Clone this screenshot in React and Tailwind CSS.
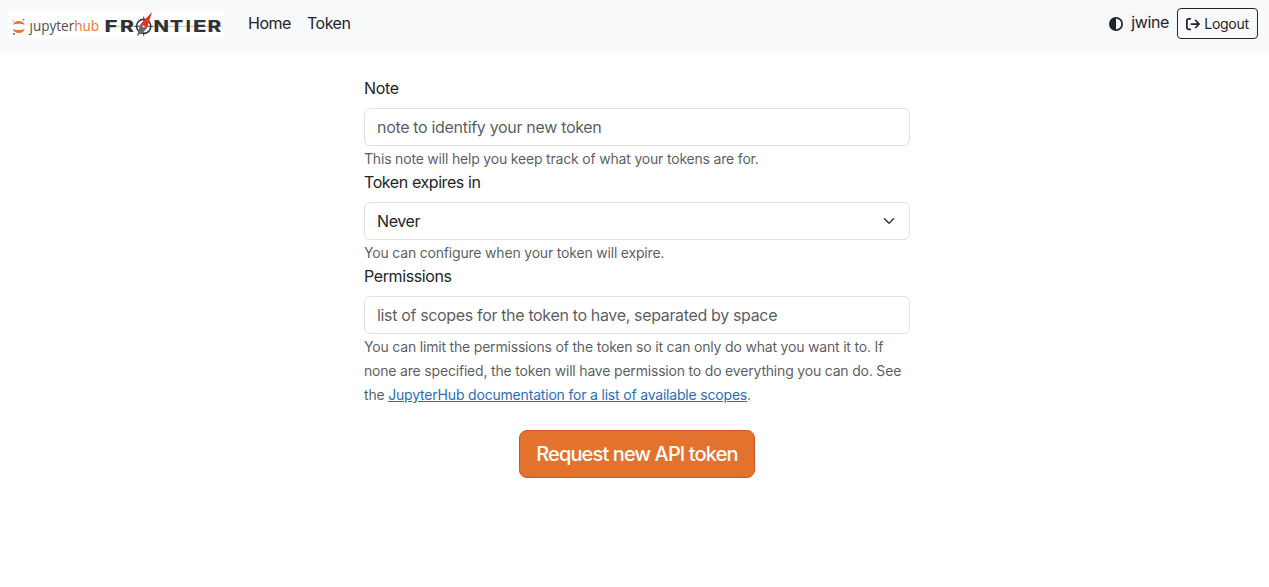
import { FaArrowRightFromBracket, FaCircleHalfStroke } from "react-icons/fa6";

function Logo() {
  return (
    <svg width="216" height="28" viewBox="8 11 216 28" role="img" aria-label="JupyterHub Frontier">
      <rect x="8" y="11" width="216" height="28" fill="#fff" />
      <g fill="#e8762d">
        <path d="M12.8 24.8 A6.3 5.6 0 0 1 24.8 24.8 A9.5 4.2 0 0 0 12.8 24.8Z" />
        <path d="M12.8 29 A6.3 5.6 0 0 0 24.8 29 A9.5 4.2 0 0 1 12.8 29Z" />
      </g>
      <g fill="#6d6d6f">
        <circle cx="23.6" cy="19.6" r="0.9" />
        <circle cx="13.4" cy="20.8" r="0.6" />
        <circle cx="14" cy="34" r="1.1" />
      </g>
      <text x="29.5" y="30.6" fontFamily="'Open Sans', sans-serif" fontSize="14" fill="#4e4e4e" textLength="69.5" lengthAdjust="spacingAndGlyphs">
        ȷupyter<tspan fill="#e8762d">hub</tspan>
      </text>
      <path d="M116 26.3H222" stroke="#999" strokeWidth="0.6" />
      <g fontFamily="Inter, sans-serif" fontWeight="800" fontSize="16.5" fill="#303236">
        <text x="104.5" y="32" textLength="13" lengthAdjust="spacingAndGlyphs">F</text>
        <text x="120" y="32" textLength="14" lengthAdjust="spacingAndGlyphs">R</text>
        <text x="153.5" y="32" textLength="15.5" lengthAdjust="spacingAndGlyphs">N</text>
        <text x="169.8" y="32" textLength="13.5" lengthAdjust="spacingAndGlyphs">T</text>
        <text x="185.8" y="32" textLength="5" lengthAdjust="spacingAndGlyphs">I</text>
        <text x="193" y="32" textLength="13.5" lengthAdjust="spacingAndGlyphs">E</text>
        <text x="207.6" y="32" textLength="13.8" lengthAdjust="spacingAndGlyphs">R</text>
      </g>
      <circle cx="143.7" cy="26.3" r="7.1" fill="none" stroke="#303236" strokeWidth="1.6" />
      <path d="M143.7 16.5V36.2M134 26.3H153.4" stroke="#303236" strokeWidth="0.8" />
      <path d="M152 12L140.2 24.6L146.8 28.8Z" fill="#e0342b" />
      <path d="M136.8 36.5L140.2 24.6L146.8 28.8Z" fill="#68696c" />
      <circle cx="143.5" cy="26.5" r="1" fill="#fff" />
    </svg>
  );
}

function Help({ children }) {
  return <div className="-mb-px pt-px text-sm leading-6 tracking-[-0.0135em] text-[#212529bf]">{children}</div>;
}

const field = "mt-2 flex h-[38px] w-full items-center rounded-md border border-[#dee2e6] bg-white px-3 text-base";

export default function App() {
  return (
    <div className="min-h-[587px] bg-white font-[Inter,sans-serif] text-base text-[#212529]">
      <nav className="flex h-[52px] items-start bg-[#f8f9fa] pl-2 pr-[11px]">
        <a href="#" className="mt-[11px] block"><Logo /></a>
        <a href="#" className="ml-6 mt-[11px] tracking-[-0.03em]">Home</a>
        <a href="#" className="ml-4 mt-[11px] tracking-[-0.03em]">Token</a>
        <div className="ml-auto flex items-start">
          <FaCircleHalfStroke className="mt-[17px] size-3.5" />
          <span className="ml-2 mt-2.5 tracking-[-0.025em]">jwine</span>
          <button className="ml-2 mt-2 flex h-[31px] w-[81px] items-center justify-center gap-1 rounded border border-[#212529] text-sm tracking-[-0.02em]">
            <FaArrowRightFromBracket className="size-3.5" />
            <span>Logout</span>
          </button>
        </div>
      </nav>
      <form className="ml-[364px] flex w-[546px] flex-col pt-6">
        <label className="leading-6 tracking-[-0.02em]">Note</label>
        <input className={`${field} tracking-[-0.02em] placeholder:text-[#212529bf]`} placeholder="note to identify your new token" />
        <Help>This note will help you keep track of what your tokens are for.</Help>
        <label className="leading-6 tracking-[-0.026em]">Token expires in</label>
        <div className={`${field} justify-between tracking-[-0.025em]`}>
          <span>Never</span>
          <svg className="mr-0.5 size-3" viewBox="0 0 16 16" fill="none" stroke="#343a40" strokeWidth="2" strokeLinecap="round" strokeLinejoin="round"><path d="m2 5 6 6 6-6" /></svg>
        </div>
        <Help>You can configure when your token will expire.</Help>
        <label className="leading-6 tracking-[-0.025em]">Permissions</label>
        <input className={`${field} tracking-[-0.0215em] placeholder:text-[#212529bf]`} placeholder="list of scopes for the token to have, separated by space" />
        <Help>
          You can limit the permissions of the token so it can only do what you want it to. If<br />
          none are specified, the token will have permission to do everything you can do. See<br />
          the <a href="#" className="text-[#296eb4] underline">JupyterHub documentation for a list of available scopes</a>.
        </Help>
        <button type="button" className="mt-6 h-12 w-[236px] self-center rounded-lg border border-[#cf5526] bg-[#e3722e] text-xl font-medium tracking-[-0.044em] text-white">
          Request new API token
        </button>
      </form>
    </div>
  );
}
